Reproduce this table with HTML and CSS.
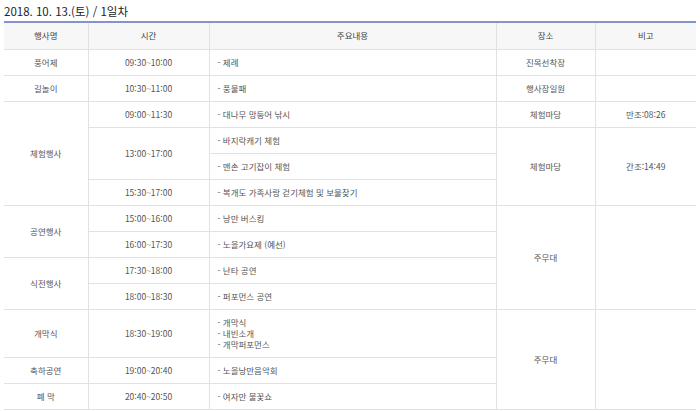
FILE: index.html
```html
<!DOCTYPE html>
<html lang="ko">
<head>
<meta charset="utf-8">
<link rel="stylesheet" href="styles.css">
</head>
<body>
<div class="page">
  <h2 class="title">2018. 10. 13.(토) / 1일차</h2>
  <table class="sched">
    <colgroup>
      <col class="c1"><col class="c2"><col class="c3"><col class="c4"><col class="c5">
    </colgroup>
    <thead>
      <tr><th>행사명</th><th>시간</th><th>주요내용</th><th>장소</th><th>비고</th></tr>
    </thead>
    <tbody>
      <tr><td>풍어제</td><td>09:30~10:00</td><td class="l">- 제례</td><td>진목선착장</td><td></td></tr>
      <tr><td>길놀이</td><td>10:30~11:00</td><td class="l">- 풍물패</td><td>행사장일원</td><td></td></tr>
      <tr><td rowspan="4">체험행사</td><td>09:00~11:30</td><td class="l">- 대나무 망둥어 낚시</td><td>체험마당</td><td>만조:08:26</td></tr>
      <tr><td rowspan="2">13:00~17:00</td><td class="l">- 바지락캐기 체험</td><td rowspan="3">체험마당</td><td rowspan="3">간조:14:49</td></tr>
      <tr><td class="l">- 맨손 고기잡이 체험</td></tr>
      <tr><td>15:30~17:00</td><td class="l">- 복개도 가족사랑 걷기체험 및 보물찾기</td></tr>
      <tr><td rowspan="2">공연행사</td><td>15:00~16:00</td><td class="l">- 낭만 버스킹</td><td rowspan="4">주무대</td><td rowspan="4"></td></tr>
      <tr><td>16:00~17:30</td><td class="l">- 노을가요제 (예선)</td></tr>
      <tr><td rowspan="2">식전행사</td><td>17:30~18:00</td><td class="l">- 난타 공연</td></tr>
      <tr><td>18:00~18:30</td><td class="l">- 퍼포먼스 공연</td></tr>
      <tr><td class="tall">개막식</td><td>18:30~19:00</td><td class="l">- 개막식<br>- 내빈소개<br>- 개막퍼포먼스</td><td rowspan="3">주무대</td><td rowspan="3"></td></tr>
      <tr><td>축하공연</td><td>19:00~20:40</td><td class="l">- 노을낭만음악회</td></tr>
      <tr><td>폐 막</td><td>20:40~20:50</td><td class="l">- 여자만 불꽃쇼</td></tr>
    </tbody>
  </table>
</div>
</body>
</html>
```

FILE: styles.css
```css
html, body {
  margin: 0;
  padding: 0;
  background: #ffffff;
}
body {
  font-family: "Noto Sans CJK KR", "Noto Sans", sans-serif;
  color: #555555;
}
.page {
  padding: 3px 4px 0 4px;
}
.title {
  margin: 0 0 2px 0;
  font-size: 11.5px;
  line-height: 16px;
  font-weight: normal;
  color: #222222;
}
.sched {
  width: 692px;
  border-collapse: collapse;
  table-layout: fixed;
  border-top: 2px solid #8593cc;
}
.c1 { width: 84px; }
.c2 { width: 121px; }
.c3 { width: 287px; }
.c4 { width: 99px; }
.c5 { width: 101px; }
.sched th,
.sched td {
  font-size: 8.5px;
  line-height: 11px;
  padding: 7px 8px;
  text-align: center;
  vertical-align: middle;
  border: 1px solid #e2e2e2;
  font-weight: normal;
}
.sched th {
  background: #f7f7f7;
  color: #444444;
  padding: 7px 8px 8px;
}
.sched th:first-child,
.sched td:first-child {
  border-left: none;
}
.sched tr > *:last-child {
  border-right: none;
}
.sched td.l {
  text-align: left;
}
.sched td.tall {
  padding: 9px 8px 10px;
}
```
